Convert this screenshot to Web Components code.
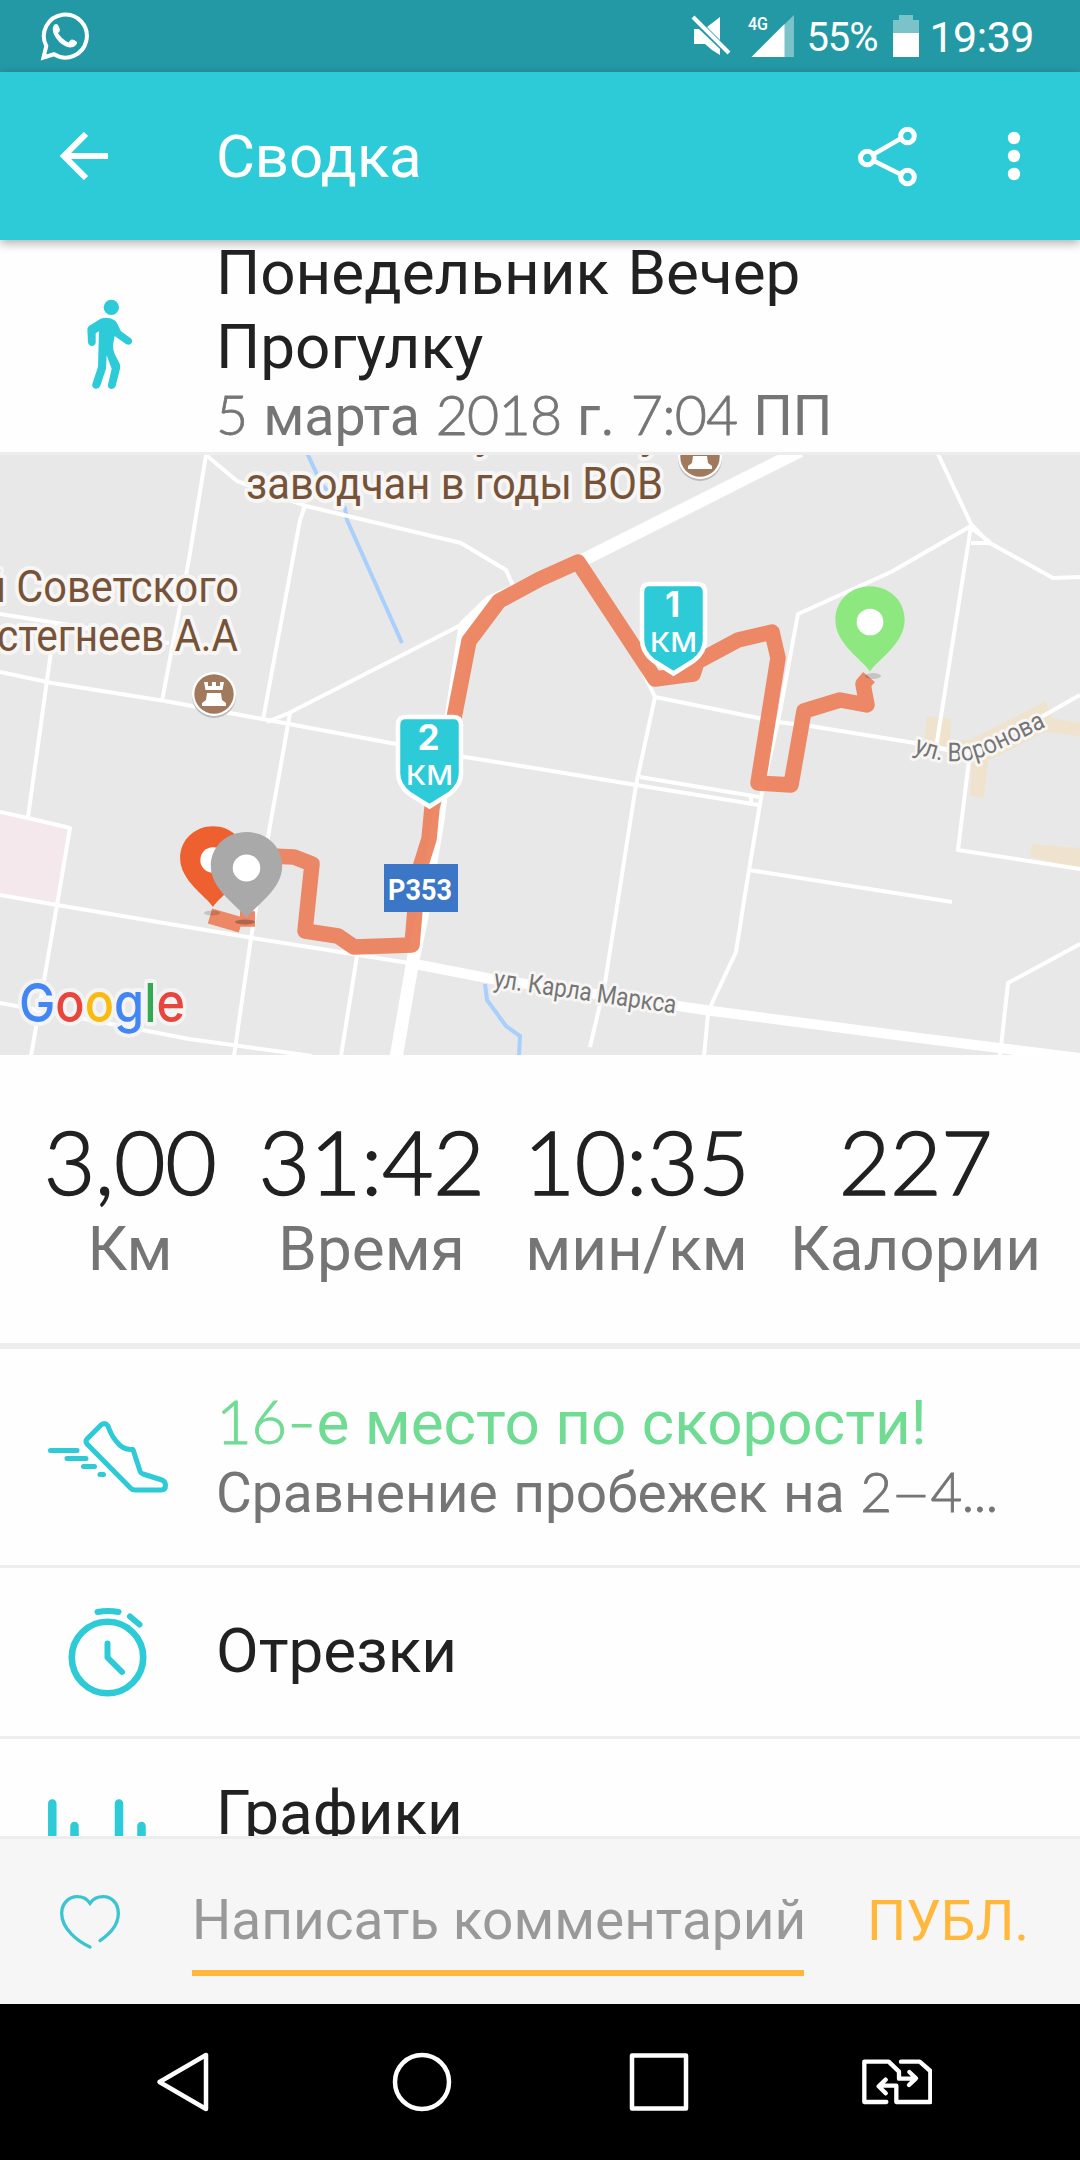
<!DOCTYPE html>
<html lang="ru">
<head>
<meta charset="utf-8">
<title>Сводка</title>
<style>
    html, body {
        margin: 0;
        padding: 0;
    }
    body {
        width: 1080px;
        height: 2160px;
        overflow: hidden;
        background: #fefefe;
        font-family: Roboto, "Noto Sans", sans-serif;
    }
</style>
</head>
<body>
<run-screen>
    <status-bar battery="55%" time="19:39"></status-bar>
    <app-bar>Сводка</app-bar>
    <run-scroll>
        <activity-header>
            Понедельник Вечер<br>Прогулку
            <mixed-text slot="date">5 марта 2018 г. 7:04 ПП</mixed-text>
        </activity-header>
        <route-map></route-map>
        <stat-row>
            <stat-item label="Км">3,00</stat-item>
            <stat-item label="Время">31:42</stat-item>
            <stat-item label="мин/км">10:35</stat-item>
            <stat-item label="Калории">227</stat-item>
        </stat-row>
        <list-row icon="shoe" class="double green">
            <mixed-text>16-е место по скорости!</mixed-text>
            <mixed-text slot="sub">Сравнение пробежек на 2–4...</mixed-text>
        </list-row>
        <list-row icon="watch">Отрезки</list-row>
        <list-row icon="bars" class="double charts">Графики</list-row>
    </run-scroll>
    <comment-bar action="ПУБЛ.">Написать комментарий</comment-bar>
    <nav-bar></nav-bar>
</run-screen>

<script>
(() => {

    // registers an element whose shadow root is a clone of the given markup
    const define = (name, html, setup) => {
        const template = document.createElement('template');
        template.innerHTML = html;

        window.customElements.define(name, class extends HTMLElement {
            constructor() {
                super();
                this.attachShadow({mode: 'open'});
                this.shadowRoot.appendChild(template.content.cloneNode(true));
            }

            connectedCallback() {
                if(setup) {
                    setup(this, this.shadowRoot);
                }
            }
        });
    };

    const icons = {
        shoe: `
            <svg width="120" height="72" viewBox="0 0 120 72" fill="none" stroke="#2dcad7" stroke-width="5" stroke-linecap="round" stroke-linejoin="round">
                <path d="M53 4 L39 18 Q37 20 39 23 L83 67.5 Q84.500 69 87 69 H113 Q117.500 69 117.500 64.500 Q117.500 60.500 114 59 L95 53 Q92.500 52 92 50 L85 28.500 Q75 29.500 68 20 Q63 14 60 5 Q57 1 53 4 Z"/>
                <path d="M2.500 29.500 H29 M19 37.500 H38 M35.500 45.500 H46.500 M52 53.500 H55.500"/>
            </svg>`,
        watch: `
            <svg width="80" height="92" viewBox="0 0 80 92" fill="none" stroke="#2dcad7" stroke-width="6" stroke-linecap="round" stroke-linejoin="round">
                <circle cx="39.500" cy="51.500" r="35.700" stroke-width="6.600"/>
                <path d="M29.500 6 Q40 3.800 50.500 6 M62 10.500 L71.500 18.500 M39.500 37.500 V51.500 L54 66"/>
            </svg>`,
        bars: `
            <svg width="120" height="96" viewBox="0 0 120 96" fill="none" stroke="#2dcad7" stroke-width="8.500" stroke-linecap="round">
                <path d="M4.300 4.500 V92 M26.500 27 V92 M71 4.500 V92 M93.500 27 V92"/>
            </svg>`
    };

    define('run-screen', `
        <style>
            :host {
                display: flex;
                flex-direction: column;
                width: 1080px;
                height: 2160px;
            }
        </style>
        <slot></slot>
    `);

    define('run-scroll', `
        <style>
            :host {
                display: block;
                flex: 1;
                min-height: 0;
                overflow: hidden;
                background: #fefefe;
            }
        </style>
        <slot></slot>
    `);

    // digits and dashes are set in another face than the letters around them
    define('mixed-text', `
        <style>
            :host {
                display: inline;
            }
            .num, .dash {
                font-family: Lato, sans-serif;
                font-weight: 300;
                -webkit-text-stroke: .8px currentColor;
                line-height: 0;
                letter-spacing: -.8px;
            }
            .dash {
                display: inline-block;
                margin: 0 4px;
                transform: scaleX(1.3);
            }
        </style>
        <span></span>
    `, (host, root) => {
        const parts = host.textContent.split(/([\d:]+\.*|[–-])/);
        const span = root.querySelector('span');
        span.innerHTML = parts.map((part, i) => {
            if(i % 2 === 0) {
                return part;
            }
            return `<span class="${/\d/.test(part) ? 'num' : 'dash'}">${part}</span>`;
        }).join('');
    });

    define('status-bar', `
        <style>
            :host {
                display: flex;
                align-items: center;
                height: 72px;
                box-sizing: border-box;
                padding: 0 46px 0 40px;
                background: #2499a6;
                color: #fff;
            }
            svg {
                display: block;
            }
            .space {
                flex: 1;
            }
            .mute {
                margin-right: 16px;
            }
            .battery {
                width: 87px;
                margin-left: 12px;
                padding-top: 2px;
                font-size: 40px;
                letter-spacing: -1.100px;
            }
            .time {
                margin-left: 10px;
                padding-top: 1px;
                font-size: 43px;
                letter-spacing: -.5px;
            }
        </style>
        <svg width="50" height="50" viewBox="0 0 50 50">
            <path d="M3.500 46.500 L6.300 35 A21.500 21.500 0 1 1 14 43.300 Z" fill="none" stroke="#fff" stroke-width="4" stroke-linejoin="miter"/>
            <path d="M14 14 Q17 11.500 18.500 15 L20 18.500 Q20 20.500 18 22 Q21.500 28 28.500 31.500 L30.500 29 Q32 28 34 29 L36.500 30.500 Q38 32 35.500 34.500 Q32 38 26 35.500 Q18 32 14 23.500 Q11.500 17.500 14 14 Z" fill="#fff"/>
        </svg>
        <span class="space"></span>
        <svg class="mute" width="41" height="42" viewBox="0 0 41 42">
            <path d="M3 14 H8 L29 34 V40 Q21 36 14 29 H3 Z M16 12 L29 2 V25 Z" fill="#fff"/>
            <path d="M2 2 L38 38" stroke="#fff" stroke-width="4"/>
        </svg>
        <svg width="46" height="42" viewBox="0 0 46 42">
            <path d="M46 0 V42 H3.500 Z" fill="#fff" opacity=".4"/>
            <path d="M36.500 9 V42 H3.500 Z" fill="#fff"/>
            <text x="0" y="15" font-size="19" font-weight="500" textLength="20" lengthAdjust="spacingAndGlyphs" fill="#fff">4G</text>
        </svg>
        <span class="battery"></span>
        <svg width="26" height="42" viewBox="0 0 26 42">
            <path d="M6 0 H20 V5 H26 V18 H0 V5 H6 Z" fill="#fff" opacity=".4"/>
            <path d="M0 18 H26 V42 H0 Z" fill="#fff"/>
        </svg>
        <span class="time"></span>
    `, (host, root) => {
        root.querySelector('.battery').innerText = host.getAttribute('battery');
        root.querySelector('.time').innerText = host.getAttribute('time');
    });

    define('app-bar', `
        <style>
            :host {
                display: flex;
                align-items: center;
                height: 168px;
                box-sizing: border-box;
                padding: 0 56px 0 60px;
                background: #2dcad7;
                color: #fff;
                position: relative;
                z-index: 1;
                box-shadow: 0 3px 10px rgba(0, 0, 0, .32);
            }
            .title {
                flex: 1;
                margin-left: 108px;
                font-size: 60px;
                letter-spacing: -.2px;
            }
            .share {
                margin-right: 86px;
            }
        </style>
        <svg width="48" height="48" viewBox="0 0 48 48" fill="none" stroke="#fff" stroke-width="6">
            <path d="M26 2 L4 24 L26 46 M4 24 H48"/>
        </svg>
        <span class="title"><slot></slot></span>
        <svg class="share" width="60" height="62" viewBox="0 0 60 62" fill="none" stroke="#fff" stroke-width="5">
            <path d="M16 29 L42 14 M16 36 L42 49" stroke-width="4.500"/>
            <circle cx="49.500" cy="11" r="6.800"/>
            <circle cx="9.300" cy="33" r="6.800"/>
            <circle cx="49.500" cy="52" r="6.800"/>
        </svg>
        <svg width="20" height="50" viewBox="0 0 20 50" fill="#fff">
            <circle cx="10" cy="7" r="6.200"/>
            <circle cx="10" cy="25" r="6.200"/>
            <circle cx="10" cy="43" r="6.200"/>
        </svg>
    `);

    define('activity-header', `
        <style>
            :host {
                display: flex;
                height: 212px;
                border-bottom: 3px solid #ededed;
                overflow: hidden;
            }
            svg {
                margin: 50px 66px 0 70px;
            }
            .text {
                margin-top: -4px;
                white-space: nowrap;
            }
            .name {
                color: #212121;
                font-size: 62px;
                line-height: 74px;
                word-spacing: 3px;
            }
            .date {
                color: #757575;
                font-size: 55.500px;
                line-height: 66px;
                word-spacing: 2px;
            }
        </style>
        <svg width="80" height="110" viewBox="0 0 240 330" fill="#2dcad7">
            <circle cx="124" cy="52" r="23"/>
            <path d="M52 118 Q52 112 58 107 L92 86 Q116 78 136 92 Q143 100 152 123 L181 144 Q189 150 185 159 Q180 167 169 163 L134 138 L129 165 Q129 182 134 192 L149 221 Q152 228 150 236 L137 288 Q133 297 124 297 Q113 295 114 284 L125 236 L110 196 L108 236 L91 287 Q86 298 76 296 Q65 293 67 282 L84 230 L87 124 L77 130 V159 Q74 168 65 168 Q55 166 54 156 Z"/>
        </svg>
        <div class="text">
            <div class="name"><slot></slot></div>
            <div class="date"><slot name="date"></slot></div>
        </div>
    `);

    define('route-map', `
        <style>
            :host {
                display: block;
                height: 600px;
                overflow: hidden;
                background: #e8e8e8;
            }
            svg {
                display: block;
                font-family: Roboto, sans-serif;
            }
            .place {
                font-size: 45px;
                fill: #765338;
                stroke: #f7f6f4;
                stroke-width: 8px;
                stroke-linejoin: round;
                paint-order: stroke;
            }
            .street {
                font-size: 26px;
                fill: #757575;
                stroke: #f7f6f4;
                stroke-width: 6px;
                stroke-linejoin: round;
                paint-order: stroke;
            }
            .km {
                font-family: Inter, sans-serif;
                fill: #fff;
                text-anchor: middle;
            }
            .google {
                font-family: Inter, sans-serif;
                font-size: 54px;
                font-weight: 500;
                stroke: #f4f4f4;
                stroke-width: 8px;
                stroke-linejoin: round;
                paint-order: stroke;
            }
        </style>
        <svg width="1080" height="600" viewBox="0 455 1080 600">
            <defs>
                <path id="voronova" d="M913 752 Q960 772 1000 749 L1070 715"/>
                <g id="pin">
                    <path d="M0 50 C-8 38 -35 22 -35 -2 C-35 -22 -19 -36 0 -36 C19 -36 35 -22 35 -2 C35 22 8 38 0 50 Z"/>
                    <circle r="13.500" fill="#fff"/>
                </g>
                <path id="shield" d="M-24 2 H24 Q31.500 2 31.500 10 V58 Q31.500 70 20 79 L0 91.500 L-20 79 Q-31.500 70 -31.500 58 V10 Q-31.500 2 -24 2 Z"/>
                <g id="castle">
                    <circle cy="2" r="22" fill="#bbb"/>
                    <circle r="22" fill="#fff"/>
                    <circle r="19.700" fill="#a17a5e"/>
                    <path d="M-10 -12 H-6 V-8 H-2 V-12 H2 V-8 H6 V-12 H10 L8.500 -4 H-8.500 Z M-7 -1 H7 L8 6 L12 9 V12 H-12 V9 L-8 6 Z" fill="#fff"/>
                </g>
            </defs>

            <path d="M0 812 L28 817 L70 828 L57 904 L0 895 Z" fill="#f4e8ed"/>
            <path d="M927 716 L951 719 L950 740 H970 L1046 701 L1052 718 L1080 723 V736 L1046 732 L988 761 L984 798 L970 796 L972 767 L924 742 Z" fill="#efe3ce"/>
            <path d="M1032 844 L1080 848 V868 L1030 857 Z" fill="#efe3ce"/>

            <g fill="none" stroke="#a9cffc" stroke-width="4">
                <path d="M307 453 L322 485 L345 508 L347 520 L402 643"/>
                <path d="M485 984 L487 1000 L506 1026 L520 1036 L519 1056"/>
            </g>

            <g fill="none" stroke="#fff" stroke-width="4" stroke-linejoin="round">
                <path d="M206 455 L189 559 L162 701"/>
                <path d="M206 455 L237 481 L306 506 L461 543 L506 570 L514 588"/>
                <path d="M305 506 L300 520 L263 720"/>
                <path d="M0 672 L52 683 L165 701 L289 724 L396 744 L465 757 L540 769 L636 785 L759 805"/>
                <path d="M267 722 L289 713 L461 625 L485 606"/>
                <path d="M290 713 L267 843 L251 938 L234 1056"/>
                <path d="M0 614 L69 625 L169 643"/>
                <path d="M55 623 L28 817"/>
                <path d="M0 812 L28 818 L70 828 L57 905 L31 1056"/>
                <path d="M0 895 L57 905 L253 938 L415 964"/>
                <path d="M357 956 L341 1056"/>
                <path d="M0 1003 L80 1018 L189 1039 L312 1056"/>
                <path d="M938 454 L971 524 L988 542 L1053 578 L1080 577"/>
                <path d="M971 526 L891 572 L798 614 L778 722 L762 792 L747 882 L736 952 L712 1003 L708 1014 L704 1056"/>
                <path d="M971 526 L936 748 M971 543 H990 M971 528 L990 542"/>
                <path d="M642 670 L655 697 L778 722 L810 726 L915 743 L970 754"/>
                <path d="M655 697 L636 785 L605 983 L590 1047"/>
                <path d="M640 777 L759 797 M751 797 V804"/>
                <path d="M749 870 L952 902"/>
                <path d="M970 752 L958 850 L1080 869"/>
                <path d="M1080 695 L1043 716 L970 755 L915 743"/>
                <path d="M1080 944 L1008 983 L1000 1056"/>
                <path d="M800 451 L581 561 L490 602 L465 626 L451 718 L438 820 L422 917 L413 960 L396 1058" stroke-width="13"/>
                <path d="M410 963 L492 979 L678 1006 L712 1011 L919 1038 L1080 1058" stroke-width="10"/>
            </g>

            <g fill="none" stroke="#ec7f5a" stroke-width="15.500" stroke-linejoin="round" opacity=".92">
                <path d="M869 677 L863 684 L867 705 L840 700 L804 711 L791 785 L758 783 L778 658 L772 632 L738 640 L697 662 L693 674 L655 679 L578 562 L540 579 L499 601 L469 641 L454 718 L432 808 L429 839 L418 874 L412 945 L354 947 L338 936 L305 931 L312 864 L294 857 L270 856"/>
                <path d="M210 916 L241 925 M240 919 L255 919"/>
            </g>

            <ellipse cx="212" cy="913" rx="8" ry="2.500" fill="#000" opacity=".15"/>
            <ellipse cx="245" cy="922" rx="10" ry="2.500" fill="#000" opacity=".25"/>
            <ellipse cx="873" cy="676" rx="8" ry="3" fill="#000" opacity=".15"/>
            <use href="#pin" transform="translate(213 860) scale(.94)" fill="#ef6030"/>
            <use href="#pin" transform="translate(246.500 868) scale(1.020 1)" fill="#a9a9a9"/>
            <use href="#pin" transform="translate(870 622) scale(.99)" fill="#8de97f"/>

            <g transform="translate(429.500 715)">
                <use href="#shield" fill="#2dcad7" stroke="#fff" stroke-width="4.500"/>
                <text class="km" x="-1" y="35" font-size="35" font-weight="700">2</text>
                <text class="km" x="0" y="70" font-size="27" font-weight="500" textLength="47" lengthAdjust="spacingAndGlyphs">КМ</text>
            </g>
            <g transform="translate(673.500 582)">
                <use href="#shield" fill="#2dcad7" stroke="#fff" stroke-width="4.500"/>
                <text class="km" x="-1" y="35" font-size="35" font-weight="700">1</text>
                <text class="km" x="0" y="70" font-size="27" font-weight="500" textLength="47" lengthAdjust="spacingAndGlyphs">КМ</text>
            </g>

            <rect x="384" y="864" width="74" height="48" fill="#3b77c6"/>
            <text x="388" y="900" font-size="30" font-weight="700" fill="#fff" textLength="64" lengthAdjust="spacingAndGlyphs">P353</text>

            <text class="place" x="475" y="448">у</text>
            <text class="place" x="640" y="448">у</text>
            <text class="place" x="246" y="499" textLength="417" lengthAdjust="spacingAndGlyphs">заводчан в годы ВОВ</text>
            <text class="place" x="-18" y="601.500" textLength="257" lengthAdjust="spacingAndGlyphs">й Советского</text>
            <text class="place" x="-3" y="651" textLength="241" lengthAdjust="spacingAndGlyphs">стегнеев А.А</text>
            <use href="#castle" x="214" y="694"/>
            <use href="#castle" x="700" y="457"/>

            <text class="street" transform="translate(493 987) rotate(8.300)" textLength="184" lengthAdjust="spacingAndGlyphs">ул. Карла Маркса</text>
            <text class="street"><textPath href="#voronova" textLength="142" lengthAdjust="spacingAndGlyphs">ул. Воронова</textPath></text>

            <text class="google" transform="translate(19 1021.500) scale(.9 1)"><tspan fill="#4285f4">G</tspan><tspan fill="#e8453c">o</tspan><tspan fill="#f9bb0f">o</tspan><tspan fill="#4285f4">g</tspan><tspan fill="#34a853">l</tspan><tspan fill="#e8453c">e</tspan></text>
        </svg>
    `);

    define('stat-row', `
        <style>
            :host {
                display: grid;
                grid-template-columns: 170px 217px 217px 245px;
                column-gap: 48px;
                padding-left: 45px;
                height: 288px;
                border-bottom: 6px solid #ededed;
            }
        </style>
        <slot></slot>
    `);

    define('stat-item', `
        <style>
            :host {
                display: flex;
                flex-direction: column;
                align-items: center;
                padding-top: 53px;
                white-space: nowrap;
            }
            .value {
                color: #212121;
                font-family: Lato, sans-serif;
                font-weight: 300;
                -webkit-text-stroke: 1.500px currentColor;
                font-size: 89px;
                line-height: 106px;
                letter-spacing: -.4px;
            }
            .label {
                color: #757575;
                font-size: 62px;
                line-height: 70px;
            }
        </style>
        <span class="value"><slot></slot></span>
        <span class="label"></span>
    `, (host, root) => {
        root.querySelector('.label').innerText = host.getAttribute('label');
    });

    define('list-row', `
        <style>
            :host {
                display: flex;
                height: 168px;
                border-bottom: 3px solid #ededed;
                color: #212121;
            }
            :host(.double) {
                height: 216px;
            }
            :host(.green) {
                color: #6fdb93;
            }
            .icon {
                display: flex;
                align-items: center;
                justify-content: center;
                width: 216px;
                flex: none;
            }
            .text {
                padding-top: 47px;
                white-space: nowrap;
            }
            :host(.double) .text {
                padding-top: 38px;
            }
            .main {
                font-size: 62px;
                line-height: 72px;
            }
            .sub {
                color: #757575;
                font-size: 55px;
                line-height: 69px;
                word-spacing: 2px;
            }
        </style>
        <div class="icon"></div>
        <div class="text">
            <div class="main"><slot></slot></div>
            <div class="sub"><slot name="sub"></slot></div>
        </div>
    `, (host, root) => {
        root.querySelector('.icon').innerHTML = icons[host.getAttribute('icon')];
    });

    define('comment-bar', `
        <style>
            :host {
                display: flex;
                height: 165px;
                border-top: 3px solid #ededed;
                background: #f6f6f6;
                font-size: 55px;
                line-height: 66px;
                white-space: nowrap;
            }
            svg {
                margin: 41px 62px 0 50px;
            }
            .field {
                width: 612px;
                height: 83px;
                padding-top: 1px;
                margin-top: 47px;
                border-bottom: 6px solid #ffb83c;
                color: #999;
            }
            .action {
                margin: 49px 0 0 63px;
                color: #ffb83c;
            }
        </style>
        <svg width="80" height="80" viewBox="0 0 240 240" fill="none" stroke="#3cc5d0" stroke-width="10" stroke-linecap="round">
            <path d="M120 201 C85 185 35 148 35 100 C35 70 57 50 82 50 C98 50 112 58 120 70 C128 58 142 50 160 50 C185 50 205 70 205 100 C205 130 183 160 150 182"/>
        </svg>
        <div class="field"><slot></slot></div>
        <div class="action"></div>
    `, (host, root) => {
        root.querySelector('.action').innerText = host.getAttribute('action');
    });

    define('nav-bar', `
        <style>
            :host {
                display: flex;
                align-items: center;
                height: 156px;
                box-sizing: border-box;
                padding-left: 154px;
                gap: 177.500px;
                background: #000;
            }
            .sim {
                margin-left: -5px;
            }
        </style>
        <svg width="60" height="64" viewBox="0 0 60 64" fill="none" stroke="#fff" stroke-width="4.500" stroke-linejoin="round">
            <path d="M52 5 V59 L5.500 32 Z"/>
        </svg>
        <svg width="60" height="60" viewBox="0 0 60 60" fill="none" stroke="#fff" stroke-width="4.500">
            <circle cx="30" cy="30" r="27"/>
        </svg>
        <svg width="60" height="60" viewBox="0 0 60 60" fill="none" stroke="#fff" stroke-width="4.500" stroke-linejoin="round">
            <path d="M3 3.500 H57 V56.500 H3 Z"/>
        </svg>
        <svg class="sim" width="70" height="46" viewBox="35 57 210 138" fill="none" stroke="#fff" stroke-width="13" stroke-linecap="round" stroke-linejoin="round">
            <path d="M108 186 H42 V65 H115 L146 95 V116 H192 M177 96 L197 115 L176 135"/>
            <path d="M152 65 H208 L240 93 V186 H138 V137 H90 M106 119 L85 139 L106 160"/>
        </svg>
    `);

})();
</script>
</body>
</html>
